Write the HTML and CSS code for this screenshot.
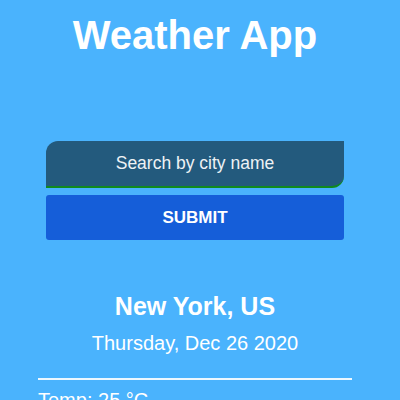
FILE: index.html
```html
<!DOCTYPE html>
<html>
<head>
<meta charset="utf-8">
<link rel="stylesheet" href="styles.css">
</head>
<body>
<div class="app">
  <h1 class="title">Weather App</h1>
  <form class="search">
    <input class="search-input" type="text" placeholder="Search by city name">
    <button class="submit" type="button">SUBMIT</button>
  </form>
  <div class="result">
    <h2 class="city">New York, US</h2>
    <p class="date">Thursday, Dec 26 2020</p>
  </div>
  <div class="details">
    <p class="temp">Temp: 25 °C</p>
  </div>
</div>
</body>
</html>
```
FILE: styles.css
```css
html, body {
  margin: 0;
  padding: 0;
  background: #4ab3fd;
  font-family: "Liberation Sans", Arial, sans-serif;
  color: #fff;
  overflow: hidden;
}
.app {
  width: 390px;
  display: flex;
  flex-direction: column;
  align-items: center;
}
.title {
  margin: 12px 0 0;
  font-size: 40px;
  line-height: 46px;
  font-weight: bold;
}
.search {
  margin-top: 83px;
  width: 298px;
  display: flex;
  flex-direction: column;
  gap: 7px;
}
.search-input {
  box-sizing: border-box;
  width: 100%;
  height: 47px;
  border: none;
  border-bottom: 2px solid #0f8a1e;
  border-radius: 12px 0 12px 0;
  background: #235a7d;
  color: #fff;
  font-family: inherit;
  font-size: 17.5px;
  text-align: center;
  outline: none;
  padding: 0;
}
.search-input::placeholder {
  color: #eef2f5;
  opacity: 1;
}
.submit {
  height: 45px;
  border: none;
  border-radius: 3px;
  background: #155ed9;
  color: #fff;
  font-family: inherit;
  font-size: 17px;
  font-weight: bold;
  padding: 0;
}
.result {
  margin-top: 52px;
  display: flex;
  flex-direction: column;
  align-items: center;
  gap: 11px;
}
.city {
  margin: 0;
  font-size: 25px;
  line-height: 29px;
  font-weight: bold;
}
.date {
  margin: 0;
  font-size: 20px;
  line-height: 23px;
}
.details {
  margin-top: 23px;
  width: 314px;
  border-top: 2px solid rgba(255,255,255,0.9);
  padding-top: 9px;
}
.temp {
  margin: 0;
  font-size: 20px;
  line-height: 23px;
}
```
